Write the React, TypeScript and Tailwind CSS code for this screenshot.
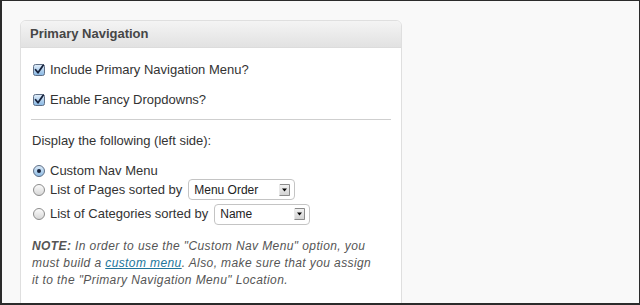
import React from "react";

function Checkbox({ id }: { id: string }) {
  return (
    <svg width="12" height="12" viewBox="0 0 12 12" className="shrink-0">
      <defs>
        <linearGradient id={id} x1="0" y1="0" x2="0" y2="1">
          <stop offset="0" stopColor="#e2eefa" />
          <stop offset="1" stopColor="#86b6e2" />
        </linearGradient>
      </defs>
      <rect x="0.5" y="0.5" width="11" height="11" rx="2" fill={`url(#${id})`} stroke="#5f6f86" />
      <path d="M2.6 5.8 L5 8.8 L10.2 1.2" fill="none" stroke="#16223c" strokeWidth="1.8" strokeLinecap="round" strokeLinejoin="round" />
    </svg>
  );
}

function Radio({ id, checked }: { id: string; checked?: boolean }) {
  return (
    <svg width="12" height="12" viewBox="0 0 12 12" className="shrink-0">
      <defs>
        <linearGradient id={id} x1="0" y1="0" x2="0" y2="1">
          {checked ? (
            <>
              <stop offset="0" stopColor="#dcebf8" />
              <stop offset="1" stopColor="#8dbbe4" />
            </>
          ) : (
            <>
              <stop offset="0" stopColor="#fdfdfd" />
              <stop offset="1" stopColor="#d6d6d6" />
            </>
          )}
        </linearGradient>
      </defs>
      <circle cx="6" cy="6" r="5.5" fill={`url(#${id})`} stroke={checked ? "#5f6f86" : "#8c8c8c"} />
      {checked && <circle cx="6" cy="6" r="2" fill="#16223c" />}
    </svg>
  );
}

function Select({ label, width, id }: { label: string; width: string; id: string }) {
  return (
    <div
      className={`${width} h-[21px] flex items-center justify-between bg-white border border-[#c4c4c4] rounded-[4px] pl-[5px] pr-[4px] text-[12px] text-[#222] leading-none`}
    >
      <span>{label}</span>
      <svg width="11" height="12" viewBox="0 0 11 12">
        <defs>
          <linearGradient id={id} x1="0" y1="0" x2="0" y2="1">
            <stop offset="0" stopColor="#f4f4f4" />
            <stop offset="1" stopColor="#cfcfcf" />
          </linearGradient>
        </defs>
        <rect x="0" y="0" width="11" height="12" fill={`url(#${id})`} />
        <path d="M0 0.5 H10.5 V11.5 H0" fill="none" stroke="#8a8a8a" strokeWidth="1" />
        <path d="M0.5 0 V11.5" stroke="#e8e8e8" strokeWidth="1" />
        <polygon points="3,4.5 8,4.5 5.5,7.5" fill="#000" />
      </svg>
    </div>
  );
}

export default function App() {
  return (
    <div
      className="w-[640px] h-[305px] overflow-hidden bg-[#f9f9f9] border-t border-l-2 border-r border-b-2 border-[#2b2b2b] pl-[18px] pt-[19px]"
      style={{ fontFamily: '"Liberation Sans", Arial, sans-serif' }}
    >
      <div className="w-[382px] h-[320px] bg-white border border-[#dfdfdf] rounded-t-[6px] overflow-hidden">
        <div className="h-[27px] bg-gradient-to-b from-[#f4f4f4] to-[#e2e2e2] border-b border-[#dcdcdc] flex items-center pl-[9px]">
          <span className="text-[13px] font-bold text-[#464646]">Primary Navigation</span>
        </div>
        <div className="px-[10px] text-[13px] text-[#333]">
          <div className="mt-[12px] h-[20px] flex items-center gap-[5px] pl-[2px]">
            <Checkbox id="cb1" />
            <span>Include Primary Navigation Menu?</span>
          </div>
          <div className="mt-[10px] h-[20px] flex items-center gap-[5px] pl-[2px]">
            <Checkbox id="cb2" />
            <span>Enable Fancy Dropdowns?</span>
          </div>
          <div className="mt-[9px] h-px bg-[#cfcfcf]" />
          <div className="mt-[11px] h-[20px] flex items-center pl-[1px]">
            Display the following (left side):
          </div>
          <div className="mt-[11px] h-[17px] flex items-center gap-[5px] pl-[2px]">
            <Radio id="r1" checked />
            <span>Custom Nav Menu</span>
          </div>
          <div className="h-[21px] flex items-center gap-[5px] pl-[2px]">
            <Radio id="r2" />
            <span>List of Pages sorted by</span>
            <div className="ml-[1px]">
              <Select label="Menu Order" width="w-[107px]" id="s1" />
            </div>
          </div>
          <div className="mt-[3px] h-[22px] flex items-center gap-[5px] pl-[2px]">
            <Radio id="r3" />
            <span>List of Categories sorted by</span>
            <div className="ml-[1px]">
              <Select label="Name" width="w-[96px]" id="s2" />
            </div>
          </div>
          <p className="mt-[13px] pl-[1px] text-[12px] leading-[17px] italic tracking-[0.4px] text-[#555] whitespace-nowrap">
            <strong className="font-bold">NOTE:</strong> In order to use the "Custom Nav Menu" option, you
            <br />
            must build a{" "}
            <a href="#" className="text-[#21759b] underline">
              custom menu
            </a>
            . Also, make sure that you assign
            <br />
            it to the "Primary Navigation Menu" Location.
          </p>
        </div>
      </div>
    </div>
  );
}
